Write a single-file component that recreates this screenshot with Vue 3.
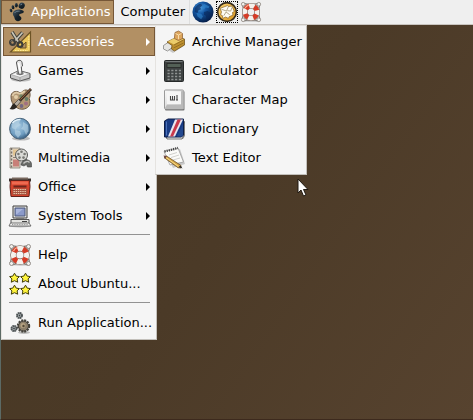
<script setup>
const mainGroups = [
  [
    { label: 'Accessories', icon: 'accessories', submenu: true, active: true },
    { label: 'Games', icon: 'games', submenu: true },
    { label: 'Graphics', icon: 'graphics', submenu: true },
    { label: 'Internet', icon: 'internet', submenu: true },
    { label: 'Multimedia', icon: 'multimedia', submenu: true },
    { label: 'Office', icon: 'office', submenu: true },
    { label: 'System Tools', icon: 'system', submenu: true },
  ],
  [
    { label: 'Help', icon: 'help' },
    { label: 'About Ubuntu...', icon: 'about' },
  ],
  [{ label: 'Run Application...', icon: 'run' }],
]

const accessories = [
  { label: 'Archive Manager', icon: 'archive' },
  { label: 'Calculator', icon: 'calculator' },
  { label: 'Character Map', icon: 'charmap' },
  { label: 'Dictionary', icon: 'dictionary' },
  { label: 'Text Editor', icon: 'editor' },
]
</script>

<template>
  <div class="desktop">
    <svg class="sprite" aria-hidden="true">
      <defs>
        <radialGradient id="g-blue" cx=".36" cy=".3" r=".8">
          <stop offset="0" stop-color="#4f9fe0" />
          <stop offset=".35" stop-color="#1558a4" />
          <stop offset="1" stop-color="#021338" />
        </radialGradient>
        <radialGradient id="g-globe" cx=".4" cy=".4" r=".65">
          <stop offset="0" stop-color="#a9cbe2" />
          <stop offset=".65" stop-color="#6e9cc0" />
          <stop offset="1" stop-color="#34587a" />
        </radialGradient>
        <linearGradient id="g-key" x1="0" y1="0" x2="1" y2="1">
          <stop offset="0" stop-color="#fafafa" />
          <stop offset="1" stop-color="#c4c4c4" />
        </linearGradient>
        <linearGradient id="g-gold" x1="0" y1="0" x2="1" y2="1">
          <stop offset="0" stop-color="#ffd878" />
          <stop offset="1" stop-color="#d9941c" />
        </linearGradient>
        <linearGradient id="g-foot" x1="0" y1="0" x2="1" y2="1">
          <stop offset="0" stop-color="#4d5f6c" />
          <stop offset=".5" stop-color="#17232c" />
          <stop offset="1" stop-color="#0c1419" />
        </linearGradient>

        <symbol id="i-foot" viewBox="0 0 20 20">
          <g fill="url(#g-foot)">
            <ellipse cx="4" cy="8.500" rx="1.300" ry="1.800" transform="rotate(-25 4 8.500)" />
            <ellipse cx="6" cy="5.300" rx="1.400" ry="2" transform="rotate(-15 6 5.300)" />
            <ellipse cx="9.300" cy="3.300" rx="1.500" ry="2.200" />
            <ellipse cx="14.700" cy="3.700" rx="3" ry="3.200" transform="rotate(25 14.700 3.700)" />
            <path d="M15.800 8.500C13 6.800 6.800 7.400 6 10.700c-.7 2.800 1.300 3.300 1.500 5.300.3 2.600 3.200 4.200 5.500 2.600 2-1.400 1.600-3.200.4-4.100-.9-.7-1.500-1-1.200-1.900.4-1.200 4.200-.8 4.600-2.700.1-.6-.3-1-1-1.400z" />
          </g>
          <path d="M7.600 10.900c1-1.500 3-1.900 5-1.700M13.500 2.800l1.500-.6" fill="none" stroke="#708594" stroke-width=".9" />
        </symbol>

        <symbol id="i-web" viewBox="0 0 24 24">
          <circle cx="12" cy="12" r="11.500" fill="url(#g-blue)" />
          <path d="M3 8c2-3 4-5 7-5l1 2-2 2 1 2-3 1-1 3-3-1zM13 12l4-1 4 2-1 5-4 2-1-4-2-1z" fill="#09285a" opacity=".65" />
          <path d="M13 3l6 3-1 2-3-1-2 2-2-2zM5 13l5 1 2 3-2 3-4-3z" fill="#3389cf" opacity=".6" />
        </symbol>

        <symbol id="i-mail" viewBox="0 0 24 24">
          <circle cx="12" cy="12" r="10.200" fill="url(#g-gold)" stroke="#33291a" stroke-width="1.700" />
          <path d="M4.500 8l8-3 1 1 4-.5 2.500 6-2 1 .5 3-4 1.500-1 2-3-1.500-3 1.500-.5-3-2-1 1-3z" fill="#fffdf4" stroke="#8a672a" stroke-width=".8" />
          <path d="M6 9l5.500 2L13.500 6M8.500 16l2.500-4 4 3M12.500 10.500l3.500.5 1.500-4" fill="none" stroke="#9a8965" stroke-width=".8" />
        </symbol>

        <symbol id="i-help" viewBox="0 0 24 24">
          <ellipse cx="13" cy="21.500" rx="9" ry="1.500" fill="#bbb" opacity=".6" />
          <path d="M3 3c2-1 4 1 9 1s7-2 9-1-1 4-1 9 3 7 1 9-4-1-9-1-7 3-9 1 1-4 1-9-2-8-1-9z" fill="none" stroke="#85817c" stroke-width="1.300" />
          <g fill="#f2f0ed" stroke="#827b75" stroke-width=".8">
            <circle cx="3.500" cy="3.500" r="2" />
            <circle cx="20.500" cy="3.500" r="2" />
            <circle cx="3.500" cy="20.500" r="2" />
            <circle cx="20.500" cy="20.500" r="2" />
          </g>
          <circle cx="12" cy="12" r="6.700" fill="none" stroke="#756057" stroke-width="6.200" />
          <circle cx="12" cy="12" r="6.700" fill="none" stroke="#f4f1ec" stroke-width="5" />
          <circle cx="12" cy="12" r="6.700" fill="none" stroke="#d53b26" stroke-width="5.200" stroke-dasharray="4.800 5.724" stroke-dashoffset="-2.862" />
          <path d="M5.500 8c1-2 2-3 4-3.500" fill="none" stroke="#ffad91" stroke-width="1.200" />
        </symbol>

        <symbol id="i-accessories" viewBox="0 0 24 24">
          <path d="M22.500 2v20h-20z" fill="#ecc75b" stroke="#6d5426" stroke-width="1.200" />
          <path d="M18 12v6h-6z" fill="#b29064" stroke="#6d5426" />
          <path d="M20.800 6v13.500M7 20.500h13" stroke="#fff0a2" stroke-width=".9" stroke-dasharray="1.500 1" />
          <path d="M4 2l7 11M14.500 2.500L6 12" stroke="#42413a" stroke-width="3.600" />
          <path d="M4 2l7 11M14.500 2.500L6 12" stroke="#c9c6b9" stroke-width="1.600" />
          <circle cx="4.500" cy="12.500" r="2.400" fill="none" stroke="#3d3d39" stroke-width="2.200" />
          <circle cx="12" cy="14.500" r="2.400" fill="none" stroke="#3d3d39" stroke-width="2.200" />
          <path d="M2.700 11.500c.4-.8 1-1.200 1.800-1.300" stroke="#9a9788" stroke-width=".8" fill="none" />
        </symbol>

        <symbol id="i-games" viewBox="0 0 24 24">
          <ellipse cx="13" cy="20.500" rx="10" ry="2" fill="#bbb" />
          <path d="M2.500 15.500L11 11.500l11 3v4.500l-10 3-9.500-3z" fill="#c8c8c8" stroke="#555" />
          <path d="M3 15.500l8-3.500 10.500 2.800-9.500 3.500z" fill="#f6f6f6" stroke="#888" stroke-width=".5" />
          <path d="M12 18.500v3" stroke="#888" stroke-width=".7" />
          <ellipse cx="12" cy="14.500" rx="3.700" ry="1.700" fill="#888" />
          <path d="M10.500 14.500L8.500 4c-.3-3 5-3.800 5.500-.7l.5 3.700-1.200 1 .7 6.500c-1 1-2.500 1-3.500 0z" fill="#e5e5e5" stroke="#555" />
          <path d="M10.500 4l1.600 8.500" stroke="#fff" stroke-width="1.700" />
        </symbol>

        <symbol id="i-graphics" viewBox="0 0 24 24">
          <path d="M3 9C2.500 4 8 2 11.500 4.500c2 1.500 3-3 7-2.500 4.500.5 4 6 2.700 8.500 1.800 4.500.8 9-5 10.500C10 22.500 3 17 3 9z" fill="#b39774" stroke="#6f5b45" />
          <path d="M4.500 8c1-3.500 4-4 6.500-2.500 2.500 1.500 3.500-2 6-2" stroke="#dfcba9" stroke-width="1.800" fill="none" />
          <circle cx="8" cy="9" r="2" fill="#e3cfa9" />
          <circle cx="13" cy="8" r="1.800" fill="#738564" />
          <circle cx="18.500" cy="11" r="1.900" fill="#667b66" />
          <circle cx="18" cy="15.500" r="2" fill="#a17082" />
          <circle cx="13.500" cy="18" r="1.900" fill="#746783" />
          <path d="M23 1L8.500 16" stroke="#382a22" stroke-width="2.800" />
          <path d="M22.500 1L12.500 11.500" stroke="#a36d43" />
          <path d="M10.500 11.500L6 16l2.500 2.500 4.500-5z" fill="#b5aca0" stroke="#45423b" stroke-width=".7" />
          <path d="M6 15.500c-2.500.5-2 3.500-4.500 5.500 4 1 7 0 7.500-3z" fill="#2c2722" />
        </symbol>

        <symbol id="i-internet" viewBox="0 0 24 24">
          <ellipse cx="13" cy="21.500" rx="9" ry="2" fill="#bbb" />
          <circle cx="12" cy="11.700" r="10.400" fill="url(#g-globe)" stroke="#476279" />
          <path d="M4 7c2-3 5-4 8-3.500L11 6l2 2-4 2-1 3-4-2zM7 13l5 1 1 3-3 4-3-4zM15 5l5 3 .5 6-2.500 4-2-5-3-1 2-3z" fill="#bfd8e7" opacity=".55" />
          <path d="M4.500 6c2-2.500 5-3.500 8-3.500" stroke="#e0eff7" stroke-width="1.400" fill="none" />
        </symbol>

        <symbol id="i-multimedia" viewBox="0 0 24 24">
          <path d="M2 2h10v20H2z" fill="#ded4c5" stroke="#847b6e" stroke-width=".8" />
          <path d="M3.500 2v20" stroke="#77716a" stroke-width="1.500" stroke-dasharray="2 1.500" />
          <path d="M5 3.500h7v6H5z" fill="#e2c594" />
          <path d="M5 11h7v1H5z" fill="#8c8174" />
          <path d="M5 13.500h6v7H5z" fill="#c87f78" />
          <path d="M10 12l5 3 8 5v-2l-5-6z" fill="#6d6e69" />
          <circle cx="13.500" cy="9" r="6" fill="#dadad6" stroke="#595957" />
          <g fill="#777773">
            <circle cx="13.500" cy="5.700" r="1.300" />
            <circle cx="16.600" cy="8" r="1.300" />
            <circle cx="15.500" cy="11.600" r="1.300" />
            <circle cx="11.500" cy="11.600" r="1.300" />
            <circle cx="10.400" cy="8" r="1.300" />
          </g>
          <path d="M13 19c0-6 9.500-7 10.500-1.500v3.500h-4l-1-2.500-2.500 1.500z" fill="#686a67" stroke="#444" stroke-width=".6" />
          <path d="M15.500 17.500c2-2.500 4.500-2.500 6-1" stroke="#c7c7c5" stroke-width="1.300" fill="none" />
        </symbol>

        <symbol id="i-office" viewBox="0 0 24 24">
          <path d="M1 3.500h22v3H1z" fill="#3a312d" />
          <path d="M4 2.500h16v2H4z" fill="#78685e" />
          <path d="M2.500 5.500h19l.5 6-1 10H3L2 11.500z" fill="#d5432c" stroke="#5f211a" />
          <path d="M4 6.500h16v3H4z" fill="#ee6a50" />
          <path d="M5.500 10.500h13v2h-13z" fill="#6d261c" />
          <path d="M4.500 13.500h15v6.500h-15z" fill="#a5523f" />
          <path d="M5.500 14.500h13M5.500 16.500h13M5.500 18.500h13" stroke="#edc7aa" stroke-dasharray="1.400 .8" />
        </symbol>

        <symbol id="i-system" viewBox="0 0 24 24">
          <ellipse cx="12" cy="22" rx="11" ry="1.500" fill="#bbb" />
          <path d="M5 2h14v12H5z" fill="#e2e2df" stroke="#414141" />
          <path d="M7 4h10v8H7z" fill="#8b9aca" stroke="#4d587a" />
          <path d="M8 5h7l-6 5H8z" fill="#c0caea" opacity=".6" />
          <path d="M8 14h8v2H8z" fill="#777" />
          <path d="M3 15.500h18v4H3z" fill="#e5e5e2" stroke="#555" />
          <path d="M14 17.500h5" stroke="#444" />
          <path d="M2.500 19h18.500l2 3H1z" fill="#f4f4f2" stroke="#555" stroke-width=".8" />
          <path d="M4 20.500h16" stroke="#999" stroke-dasharray="1 .7" />
        </symbol>

        <symbol id="i-about" viewBox="0 0 24 24">
          <g fill="#fff43c" stroke="#3f3c08" stroke-width="1" stroke-linejoin="round">
            <path id="star" d="M6.500 1.200l1.700 2.900 3.200.5-2.300 2.300.6 3.300-3.200-1.500-3.200 1.500.6-3.300-2.300-2.300 3.200-.5z" />
            <use href="#star" x="11" />
            <use href="#star" y="12" />
            <use href="#star" x="11" y="12" />
          </g>
        </symbol>

        <symbol id="i-run" viewBox="0 0 24 24">
          <ellipse cx="16" cy="21.500" rx="6" ry="1.500" fill="#bbb" />
          <circle cx="15.500" cy="15" r="5" fill="#8b7e69" stroke="#3e3b36" />
          <circle cx="15.500" cy="15" r="5.700" fill="none" stroke="#44423b" stroke-width="2" stroke-dasharray="2 .984" />
          <circle cx="15" cy="14.500" r="2.500" fill="#b5a281" />
          <circle cx="15.500" cy="15" r="1.200" fill="#544938" />
          <circle cx="11.500" cy="4.500" r="2.500" fill="#bcc1c2" stroke="#4c5254" stroke-width="2" stroke-dasharray="1.600 .364" />
          <circle cx="11.500" cy="4.500" r=".9" fill="#394044" />
          <circle cx="6" cy="17.500" r="2.500" fill="#bcc1c2" stroke="#4c5254" stroke-width="2" stroke-dasharray="1.600 .364" />
          <circle cx="6" cy="17.500" r=".9" fill="#394044" />
        </symbol>

        <symbol id="i-archive" viewBox="0 0 24 24">
          <path d="M3 18l14-8 6 5-12 8z" fill="#aaa" opacity=".6" />
          <path d="M1.500 15.500l6-4 4 5-6 4.500-4-2z" fill="#e5e5e3" stroke="#777" stroke-width=".7" />
          <path d="M5 12l10-5 7.500 2v6l-10 6-3-2 .5-3.500z" fill="#bd902f" stroke="#74541c" stroke-width=".8" />
          <path d="M6 11.500l8.500-4.500 7 2.300-9.500 5.200z" fill="#ebcc6b" />
          <path d="M12 15l9.500-5M11.500 18l10-5" stroke="#8e6820" stroke-width=".8" />
          <path d="M12.500 7l.5-4.500 3.500-1.500 4 2.500v5l-4 2-4-2z" fill="#dca55c" stroke="#96673a" stroke-width=".8" />
          <path d="M13.500 3.500l3 1.500 3-1.500M16.500 5v4" stroke="#f8dbab" fill="none" />
        </symbol>

        <symbol id="i-calculator" viewBox="0 0 24 24">
          <rect x="2.500" y="1.500" width="19" height="21" rx="1" fill="#3e4242" stroke="#252828" />
          <path d="M3.500 2.500h17" stroke="#737878" />
          <rect x="5" y="4.500" width="14" height="4" fill="#536056" stroke="#222" stroke-width=".7" />
          <path d="M5.500 11.500h13.500M5.500 14.500h13.500M5.500 17.500h13.500M5.500 20.500h13.500" stroke="#8f9392" stroke-width="1.600" stroke-dasharray="2.200 1.566" />
        </symbol>

        <symbol id="i-charmap" viewBox="0 0 24 24">
          <rect x="3" y="3" width="19.500" height="19.500" rx="1" fill="#777" />
          <rect x="2.500" y="2" width="19" height="19" rx="1" fill="url(#g-key)" stroke="#999" />
          <path d="M5 3.500h14v13H5z" fill="#f5f5f5" />
          <path d="M19 3.500l2.500-1.500v19L19 16.500M5 16.500L2.500 21h19L19 16.500" fill="#b9b9b9" />
          <path d="M8.500 8v4h2V8M10.500 12h2V8M15 7v5M14 12h2" fill="none" stroke="#454545" stroke-width="1.100" />
        </symbol>

        <symbol id="i-dictionary" viewBox="0 0 24 24">
          <path d="M4 20L21 4l2 1v14l-2 3H5z" fill="#999" />
          <path d="M4 19h16l2-15v14l-2 4H5z" fill="#ecece9" stroke="#555" stroke-width=".8" />
          <path d="M2.500 4L6 2h15.500v16l-2 2h-17z" fill="#183b84" stroke="#0e1f49" />
          <path d="M13 2.500h8L13 19.500H6z" fill="#e9e6ed" />
          <path d="M15.500 2.500H19L11 19.500H8z" fill="#c9394b" />
          <path d="M21 7v11l-1 1.500h-5z" fill="#24498f" />
          <path d="M4.500 4.500v14" stroke="#4a70b7" />
        </symbol>

        <symbol id="i-editor" viewBox="0 0 24 24">
          <path d="M4 7l14-4 5 15-12 4z" fill="#aaa" opacity=".6" />
          <path d="M2 5.500L16 2l5.500 14L8 19z" fill="#fbfbf9" stroke="#999" stroke-width=".8" />
          <path d="M2.500 5.500L16 2" stroke="#454545" stroke-width="2.400" stroke-dasharray="1.200 1" />
          <path d="M7 9l8-2.500M9 11.500l8-2.500M11 14l7-2" stroke="#c5c5c2" stroke-width=".8" />
          <path d="M2 11.500l2.500-1.500 14.500 9.500v2.500l-3-.3z" fill="#d7a747" stroke="#6b512b" stroke-width=".8" />
          <path d="M4 11.500l12.500 9" stroke="#f7dc89" />
          <path d="M1.500 9.500L5 10l-2 3z" fill="#6e4540" />
          <path d="M16.500 21l2-1.500 2 3z" fill="#272727" />
        </symbol>
      </defs>
    </svg>

    <header class="panel">
      <nav class="menubar" aria-label="Panel">
        <button class="menu-button open" type="button" aria-haspopup="menu" aria-expanded="true">
          <svg class="foot" aria-hidden="true"><use href="#i-foot" /></svg>
          <span>Applications</span>
        </button>
        <button class="menu-button" type="button" aria-haspopup="menu">Computer</button>
      </nav>
      <div class="launchers">
        <button class="launcher" type="button" aria-label="Web Browser">
          <svg aria-hidden="true"><use href="#i-web" /></svg>
        </button>
        <button class="launcher focused" type="button" aria-label="Email">
          <svg aria-hidden="true"><use href="#i-mail" /></svg>
        </button>
        <button class="launcher" type="button" aria-label="Help">
          <svg aria-hidden="true"><use href="#i-help" /></svg>
        </button>
      </div>
    </header>

    <div class="menu main-menu" role="menu" aria-label="Applications">
      <div v-for="(group, index) in mainGroups" :key="index" class="group" role="group">
        <div v-for="item in group" :key="item.label" class="entry">
          <button class="item" :class="{ active: item.active }" type="button" role="menuitem">
            <svg class="icon" aria-hidden="true"><use :href="'#i-' + item.icon" /></svg>
            <span class="label">{{ item.label }}</span>
            <svg v-if="item.submenu" class="arrow" viewBox="0 0 4 8" aria-hidden="true">
              <path d="M0 0l4 4-4 4z" fill="currentColor" />
            </svg>
          </button>
          <div v-if="item.active" class="menu submenu" role="menu" aria-label="Accessories">
            <button v-for="sub in accessories" :key="sub.label" class="item" type="button" role="menuitem">
              <svg class="icon" aria-hidden="true"><use :href="'#i-' + sub.icon" /></svg>
              <span class="label">{{ sub.label }}</span>
            </button>
          </div>
        </div>
      </div>
    </div>

    <svg class="pointer" viewBox="0 0 12 19" aria-hidden="true">
      <path d="M1 1v14l3-3 2.500 6 2.500-1-2.500-5.500H11z" fill="#fff" stroke="#211b13" stroke-width="1" />
    </svg>
  </div>
</template>

<style>
body {
  margin: 0;
}
</style>

<style scoped>
.desktop {
  position: relative;
  box-sizing: border-box;
  min-height: 100vh;
  overflow: hidden;
  border-left: 1px solid #5c6a65;
  border-bottom: 1px solid #3d2a1d;
  background: linear-gradient(125deg, #483824 20%, #4b3a27 50%, #57432f 100%);
  color: #000;
  font: 13px/16px "DejaVu Sans", sans-serif;
}

.sprite {
  position: absolute;
  width: 0;
  height: 0;
}

button {
  margin: 0;
  padding: 0;
  border: 0;
  background: none;
  color: inherit;
  font: inherit;
  text-align: left;
}

.panel {
  display: flex;
  box-sizing: border-box;
  height: 25px;
  border-bottom: 1px solid #c9c5c0;
  background: #efefef;
}

.menubar {
  display: flex;
  border-right: 1px solid #dedede;
}

.menu-button {
  display: flex;
  align-items: center;
  box-sizing: border-box;
  height: 24px;
  padding: 0 3px 0 5px;
  border: 1px solid transparent;
  white-space: nowrap;
}

.menu-button.open {
  gap: 4px;
  border-color: #765737;
  background: #b29064;
  color: #fff;
}

.foot {
  width: 20px;
  height: 20px;
}

.launchers {
  display: flex;
  align-items: center;
  gap: 2px;
  padding: 0 2px;
}

.launcher {
  display: flex;
  box-sizing: border-box;
  width: 22px;
  height: 22px;
}

.launcher svg {
  width: 22px;
  height: 22px;
}

.focused {
  outline: 1px dotted #000;
  outline-offset: -1px;
}

.menu {
  position: absolute;
  box-sizing: border-box;
  border: 1px solid #c3c0bb;
  border-top-color: #e5e3e0;
  border-left-color: #e5e3e0;
  background: #f5f5f5;
  color: #000;
}

.main-menu {
  top: 25px;
  left: 0;
  width: 156px;
  padding: 1px 1px 2px;
}

.submenu {
  top: -2px;
  left: 100%;
  width: 152px;
  padding: 1px 1px 2px;
}

.group + .group::before {
  content: "";
  display: block;
  height: 1px;
  margin: 4px 5px 5px 6px;
  background: #929292;
}

.entry {
  position: relative;
}

.item {
  display: flex;
  align-items: center;
  gap: 6px;
  box-sizing: border-box;
  width: 100%;
  height: 29px;
  padding: 0 4px;
  border: 1px solid transparent;
  white-space: nowrap;
}

.item.active {
  border-color: #765737;
  background: #b29064;
  color: #fff;
}

.icon {
  flex: none;
  width: 24px;
  height: 24px;
}

.label {
  flex: 1;
}

.arrow {
  flex: none;
  width: 4px;
  height: 8px;
}

.pointer {
  position: absolute;
  top: 178px;
  left: 296px;
  width: 12px;
  height: 19px;
}
</style>
